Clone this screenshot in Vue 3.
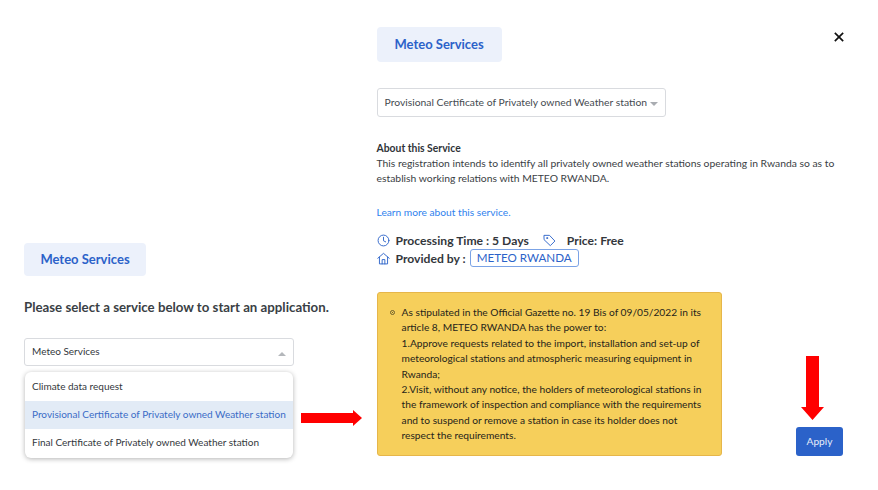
<script setup>
const options = [
  { label: 'Climate data request', active: false },
  { label: 'Provisional Certificate of Privately owned Weather station', active: true },
  { label: 'Final Certificate of Privately owned Weather station', active: false },
]
const notice = [
  'As stipulated in the Official Gazette no. 19 Bis of 09/05/2022 in its article 8, METEO RWANDA has the power to:',
  '1.Approve requests related to the import, installation and set-up of meteorological stations and atmospheric measuring equipment in Rwanda;',
  '2.Visit, without any notice, the holders of meteorological stations in the framework of inspection and compliance with the requirements and to suspend or remove a station in case its holder does not respect the requirements.',
]
</script>

<template>
  <div class="page">
    <section class="left">
      <div class="chip chip-left">Meteo Services</div>
      <h2 class="prompt">Please select a service below to start an application.</h2>
      <div class="select select-left">
        <span>Meteo Services</span>
        <i class="caret caret-up"></i>
      </div>
      <ul class="menu">
        <li v-for="o in options" :key="o.label" :class="{ active: o.active }">{{ o.label }}</li>
      </ul>
    </section>

    <section class="right">
      <div class="chip chip-right">Meteo Services</div>
      <div class="select select-right">
        <span>Provisional Certificate of Privately owned Weather station</span>
        <i class="caret caret-down"></i>
      </div>
      <h3 class="about-title">About this Service</h3>
      <p class="about">This registration intends to identify all privately owned weather stations operating in Rwanda so as to establish working relations with METEO RWANDA.</p>
      <a class="learn">Learn more about this service.</a>
      <div class="facts">
        <div class="fact">
          <svg class="icon" viewBox="0 0 24 24"><circle cx="12" cy="12" r="10"/><path d="M12 6v6.5l4 2"/></svg>
          <b>Processing Time : 5 Days</b>
          <svg class="icon tag" viewBox="0 0 24 24"><path d="M2.5 2.5h9.5l10 10.5-8.5 8.5L2.5 11z"/><circle cx="7.5" cy="7.5" r="1"/></svg>
          <b>Price: Free</b>
        </div>
        <div class="fact">
          <svg class="icon" viewBox="0 0 24 24"><path d="M1.5 11.5 12 2.5l10.5 9"/><path d="M4.5 9.5V22h15V9.5"/><path d="M9.5 22v-8h5v8"/></svg>
          <b>Provided by :</b>
          <span class="badge">METEO RWANDA</span>
        </div>
      </div>
      <div class="bottom">
        <div class="notice">
          <span class="bullet"></span>
          <div class="notice-text">
            <div v-for="n in notice" :key="n">{{ n }}</div>
          </div>
        </div>
        <button class="apply">Apply</button>
      </div>
    </section>

    <svg class="close" viewBox="0 0 12 12"><path d="M1 1l10 10M11 1 1 11"/></svg>
    <svg class="arrow arrow-right" viewBox="0 0 61 16"><path d="M0 3h52V0l9 8-9 8v-3H0z"/></svg>
    <svg class="arrow arrow-down" viewBox="0 0 23 64"><path d="M5 0h13v51h5L11.5 64 0 51h5z"/></svg>
  </div>
</template>

<style scoped>
.page {
  position: relative;
  display: flex;
  width: 878px;
  height: 490px;
  overflow: hidden;
  background: #fff;
  font-family: "Lato", "Noto Sans", sans-serif;
  color: #2f3338;
}
.left {
  width: 353px;
  margin-left: 24px;
  padding-top: 243px;
  box-sizing: border-box;
}
.right {
  width: 467px;
  margin-right: 35px;
  padding-top: 27px;
  box-sizing: border-box;
}
.chip {
  display: flex;
  align-items: center;
  justify-content: center;
  box-sizing: border-box;
  padding-bottom: 2px;
  background: #ecf1fb;
  border-radius: 4px;
  color: #2b62c9;
  font-size: 13px;
  font-weight: 700;
}
.chip-left { width: 122px; height: 33px; }
.chip-right { width: 125px; height: 35px; }
.prompt {
  margin: 22px 0 0;
  font-size: 13.25px;
  line-height: 18px;
  font-weight: 700;
  color: #3a3f45;
}
.select {
  display: flex;
  align-items: center;
  justify-content: space-between;
  box-sizing: border-box;
  background: #fff;
  border: 1px solid #d9dbdf;
  border-radius: 3px;
  font-size: 10px;
}
.select-left {
  width: 270px;
  height: 28px;
  margin-top: 22px;
  padding: 0 7px 2px;
  color: #33373c;
}
.select-right {
  width: 289px;
  height: 29px;
  margin-top: 26px;
  padding: 0 7px 2px;
  font-size: 10.35px;
  color: #454a50;
}
.caret {
  width: 0;
  height: 0;
  border-left: 4px solid transparent;
  border-right: 4px solid transparent;
}
.caret-up { border-bottom: 4px solid #b4b7bb; margin-top: 5px; }
.caret-down { border-top: 4px solid #a9acb1; margin-top: 4px; }
.menu {
  list-style: none;
  width: 268px;
  margin: 6px 0 0 1px;
  padding: 1px 0;
  background: #fff;
  border-radius: 6px;
  box-shadow: 0 1px 5px rgba(0, 0, 0, 0.3);
  overflow: hidden;
  font-size: 10px;
}
.menu li {
  height: 28px;
  line-height: 26px;
  padding: 0 7px;
  white-space: nowrap;
  color: #33373c;
}
.menu li.active {
  background: #e2ebf6;
  color: #3a6cc6;
}
.about-title {
  margin: 24px 0 0;
  font-size: 10.35px;
  line-height: 15px;
  font-weight: 700;
  color: #2f3338;
}
.about {
  margin: 0;
  font-size: 10.35px;
  line-height: 15px;
  color: #3a3e44;
}
.learn {
  display: block;
  margin-top: 19px;
  font-size: 10.2px;
  line-height: 15px;
  color: #2f82ee;
}
.facts { margin-top: 11px; }
.fact {
  display: flex;
  align-items: center;
  height: 18px;
  font-size: 12.15px;
  color: #33373c;
}
.fact b { font-weight: 700; }
.icon {
  flex: none;
  width: 13px;
  height: 13px;
  margin-right: 6px;
  fill: none;
  stroke: #2b62c9;
  stroke-width: 1.7;
  stroke-linejoin: round;
  stroke-linecap: round;
}
.icon.tag { margin: 0 11px 0 14px; }
.badge {
  margin-left: 4px;
  padding: 0 6px;
  height: 18px;
  line-height: 16px;
  box-sizing: border-box;
  border: 1px solid #7ba3e6;
  border-radius: 3px;
  font-size: 11.6px;
  color: #2b62c9;
}
.bottom {
  display: flex;
  justify-content: space-between;
  align-items: flex-end;
  margin-top: 25px;
}
.notice {
  display: flex;
  width: 345px;
  height: 164px;
  box-sizing: border-box;
  padding: 12px 15px 0 12px;
  background: #f6cf5b;
  border: 1px solid #e6b64a;
  border-radius: 3px;
  font-size: 10.2px;
  line-height: 15.4px;
  color: #26241a;
}
.bullet {
  flex: none;
  width: 5px;
  height: 5px;
  margin: 5px 7px 0 0;
  border: 1px solid #6d5f2c;
  border-radius: 50%;
  box-sizing: border-box;
  background: radial-gradient(circle, #6d5f2c 35%, transparent 40%);
}
.apply {
  width: 47px;
  height: 29px;
  padding: 0 0 1px;
  border: none;
  border-radius: 3px;
  background: #2b62c9;
  color: #e6edf9;
  font: 10.2px "Lato", sans-serif;
}
.close {
  position: absolute;
  left: 834px;
  top: 32px;
  width: 10px;
  height: 10px;
  fill: none;
  stroke: #111;
  stroke-width: 2;
  overflow: visible;
}
.arrow { position: absolute; fill: #f00; }
.arrow-right { left: 301px; top: 410px; width: 61px; height: 16px; }
.arrow-down { left: 801px; top: 356px; width: 23px; height: 64px; }
</style>
